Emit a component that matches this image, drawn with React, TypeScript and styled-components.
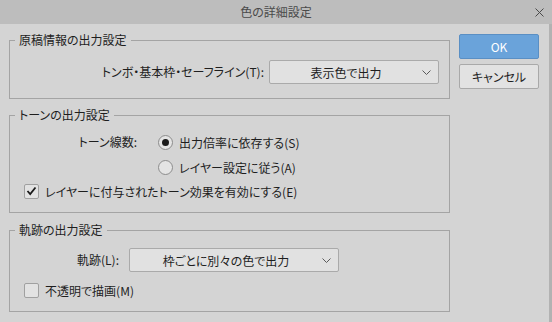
import React from "react";
import styled, { createGlobalStyle } from "styled-components";

const GlobalStyle = createGlobalStyle`
  html, body {
    margin: 0;
    padding: 0;
    background: #d4d4d4;
  }
  body {
    font-family: "Noto Sans CJK JP", "Noto Sans", sans-serif;
    font-feature-settings: "palt";
    font-size: 12px;
    color: #1e1e1e;
  }
`;

const Window = styled.div`
  width: 552px;
  height: 322px;
  display: flex;
  flex-direction: column;
  overflow: hidden;
`;

const TitleBar = styled.div`
  height: 24px;
  flex-shrink: 0;
  background: #bdbdbd;
  display: grid;
  grid-template-columns: 1fr auto 1fr;
  align-items: center;
`;

const Title = styled.div`
  grid-column: 2;
  font-size: 12px;
  line-height: 24px;
  color: #4a4a4a;
`;

const CloseButton = styled.div`
  grid-column: 3;
  justify-self: end;
  width: 9px;
  height: 9px;
  margin-right: 8px;
  display: flex;
`;

const Body = styled.div`
  flex: 1;
  display: flex;
  align-items: flex-start;
  gap: 9px;
  padding: 8px 0 0 9px;
  border-right: 3px solid #b2b2b2;
`;

const Column = styled.div`
  width: 441px;
  display: flex;
  flex-direction: column;
  gap: ${(p: { $gap?: number }) => p.$gap ?? 8}px;
`;

const Group = styled.fieldset`
  margin: 0;
  padding: 0;
  min-width: 0;
  border: 1px solid #a4a4a4;
`;

const Legend = styled.legend`
  margin-left: 5px;
  padding: 0 4px;
  font-size: 12px;
  line-height: 16px;
  color: #1e1e1e;
`;

const GroupContent = styled.div<{ $pad: string }>`
  padding: ${(p) => p.$pad};
  display: flex;
  flex-direction: column;
`;

const FieldRow = styled.div<{ $end?: boolean; $gap: number }>`
  display: flex;
  align-items: center;
  justify-content: ${(p) => (p.$end ? "flex-end" : "flex-start")};
  gap: ${(p) => p.$gap}px;
`;

const FieldLabel = styled.span<{ $width?: number }>`
  ${(p) => (p.$width ? `width: ${p.$width}px;` : "")}
  text-align: right;
  white-space: nowrap;
  line-height: 20px;
`;

const Combo = styled.div<{ $width: number; $textShift: number }>`
  width: ${(p) => p.$width}px;
  height: 24px;
  box-sizing: border-box;
  border: 1px solid #aaaaaa;
  border-radius: 2px;
  background: #e1e1e1;
  display: flex;
  align-items: center;
  position: relative;
  padding-right: ${(p) => p.$textShift}px;
`;

const ComboText = styled.span`
  flex: 1;
  text-align: center;
  white-space: nowrap;
`;

const Chevron = styled.svg`
  position: absolute;
  right: 7px;
  top: 9px;
`;

const RadioGrid = styled.div`
  display: grid;
  grid-template-columns: 113px auto;
  column-gap: 21px;
  row-gap: 5px;
  align-items: center;
`;

const Option = styled.label`
  display: flex;
  align-items: center;
  gap: 6px;
  height: 20px;
  white-space: nowrap;
`;

const RadioCircle = styled.span<{ $checked?: boolean }>`
  width: 15px;
  height: 15px;
  box-sizing: border-box;
  border-radius: 50%;
  border: 1px solid #8c8c8c;
  background: #e4e4e4;
  display: flex;
  align-items: center;
  justify-content: center;
  &::after {
    content: "";
    width: 7px;
    height: 7px;
    border-radius: 50%;
    background: #1a1a1a;
    display: ${(p) => (p.$checked ? "block" : "none")};
  }
`;

const CheckBox = styled.span`
  width: 15px;
  height: 15px;
  box-sizing: border-box;
  border: 1px solid #a0a0a0;
  border-radius: 2px;
  background: #e2e2e2;
  display: flex;
  align-items: center;
  justify-content: center;
`;

const Buttons = styled.div`
  width: 80px;
  margin-top: 2px;
  display: flex;
  flex-direction: column;
  gap: 5px;
`;

const Button = styled.div<{ $primary?: boolean }>`
  height: 25px;
  box-sizing: border-box;
  border-radius: 2px;
  border: 1px solid ${(p) => (p.$primary ? "#5a8fc4" : "#a9a9a9")};
  background: ${(p) => (p.$primary ? "#6aa3da" : "#e2e2e2")};
  color: ${(p) => (p.$primary ? "#ffffff" : "#1e1e1e")};
  display: flex;
  align-items: center;
  justify-content: center;
  font-size: 12px;
`;

const ChevronIcon = () => (
  <Chevron width="9" height="6" viewBox="0 0 9 6">
    <path d="M0.5 0.5 L4.5 4.5 L8.5 0.5" fill="none" stroke="#5a5a5a" strokeWidth="1" />
  </Chevron>
);

const Check = ({ checked }: { checked?: boolean }) => (
  <CheckBox>
    {checked && (
      <svg width="11" height="10" viewBox="0 0 11 10">
        <path d="M1.5 5 L4.2 8 L9.5 1.5" fill="none" stroke="#1a1a1a" strokeWidth="1.8" />
      </svg>
    )}
  </CheckBox>
);

export default function App() {
  return (
    <>
      <GlobalStyle />
      <Window>
        <TitleBar>
          <Title>色の詳細設定</Title>
          <CloseButton>
            <svg width="9" height="9" viewBox="0 0 9 9">
              <path d="M0.5 0.5 L8.5 8.5 M8.5 0.5 L0.5 8.5" stroke="#4a4a4a" strokeWidth="1" />
            </svg>
          </CloseButton>
        </TitleBar>
        <Body>
          <Column>
            <Group>
              <Legend>原稿情報の出力設定</Legend>
              <GroupContent $pad="12px 10px 14px 14px">
                <FieldRow $end $gap={5}>
                  <FieldLabel>トンボ・基本枠・セーフライン(T):</FieldLabel>
                  <Combo $width={170} $textShift={16}>
                    <ComboText>表示色で出力</ComboText>
                    <ChevronIcon />
                  </Combo>
                </FieldRow>
              </GroupContent>
            </Group>

            <Group>
              <Legend>トーンの出力設定</Legend>
              <GroupContent $pad="9px 10px 11px 14px">
                <RadioGrid>
                  <FieldLabel $width={113}>トーン線数:</FieldLabel>
                  <Option>
                    <RadioCircle $checked />
                    出力倍率に依存する(S)
                  </Option>
                  <span />
                  <Option>
                    <RadioCircle />
                    レイヤー設定に従う(A)
                  </Option>
                </RadioGrid>
                <Option style={{ marginTop: 4 }}>
                  <Check checked />
                  レイヤーに付与されたトーン効果を有効にする(E)
                </Option>
              </GroupContent>
            </Group>

            <Group style={{ marginTop: 1 }}>
              <Legend>軌跡の出力設定</Legend>
              <GroupContent $pad="10px 10px 11px 14px">
                <FieldRow $gap={10}>
                  <FieldLabel $width={95}>軌跡(L):</FieldLabel>
                  <Combo $width={210} $textShift={16}>
                    <ComboText>枠ごとに別々の色で出力</ComboText>
                    <ChevronIcon />
                  </Combo>
                </FieldRow>
                <Option style={{ marginTop: 8 }}>
                  <Check />
                  不透明で描画(M)
                </Option>
              </GroupContent>
            </Group>
          </Column>
          <Buttons>
            <Button $primary>OK</Button>
            <Button>キャンセル</Button>
          </Buttons>
        </Body>
      </Window>
    </>
  );
}
